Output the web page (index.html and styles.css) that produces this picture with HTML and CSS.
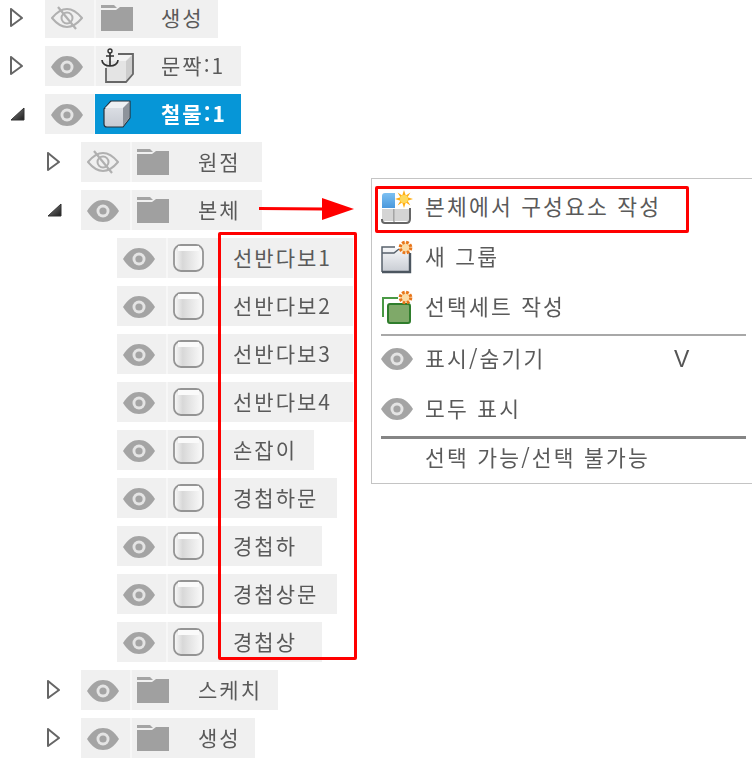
FILE: index.html
```html
<!DOCTYPE html>
<html lang="ko">
<head>
    <meta charset="UTF-8">
    <title>브라우저 트리</title>
    <link rel="stylesheet" href="styles.css">
</head>
<body>
    <svg class="defs" width="0" height="0">
        <defs>
            <linearGradient id="faceGrad" x1="0" y1="0" x2="0" y2="1">
                <stop offset="0" stop-color="#e2e5ea"/>
                <stop offset="1" stop-color="#c6cad2"/>
            </linearGradient>
            <linearGradient id="groupGrad" x1="0" y1="0" x2="0" y2="1">
                <stop offset="0" stop-color="#f6f7f9"/>
                <stop offset="1" stop-color="#c8ccd3"/>
            </linearGradient>
            <linearGradient id="panelGrad" x1="0" y1="0" x2="0" y2="1">
                <stop offset="0" stop-color="#7cc0f2"/>
                <stop offset="1" stop-color="#4a98dc"/>
            </linearGradient>
            <linearGradient id="bodyGrad" x1="0" y1="0" x2="1" y2="0">
                <stop offset="0" stop-color="#fafafa"/>
                <stop offset="0.3" stop-color="#d8d8d8"/>
                <stop offset="1" stop-color="#fbfbfb"/>
            </linearGradient>
            <linearGradient id="darkGrad" x1="0" y1="0" x2="1" y2="1">
                <stop offset="0" stop-color="#888"/>
                <stop offset="1" stop-color="#1c1c1c"/>
            </linearGradient>
            <symbol id="eye" viewBox="0 0 32 22">
                <path d="M0 11C5 3 10 0 16 0s11 3 16 11c-5 8-10 11-16 11S5 19 0 11z" fill="#a4a4a4"/>
                <circle cx="16" cy="11" r="6.5" fill="#e4e4e4"/>
                <circle cx="16" cy="11" r="3.6" fill="#a4a4a4"/>
            </symbol>
            <symbol id="eyeOff" viewBox="0 0 32 24">
                <path d="M1 12C6 6 11 3 16 3s10 3 15 9c-5 6-10 9-15 9S6 18 1 12z" fill="none" stroke="#b0b0b0" stroke-width="2"/>
                <circle cx="16" cy="12" r="5.5" fill="none" stroke="#b0b0b0" stroke-width="2"/>
                <path d="M7 1l18 22" stroke="#b0b0b0" stroke-width="2.2"/>
            </symbol>
            <symbol id="folder" viewBox="0 0 32 26">
                <path d="M0 0h13l3 3H0z" fill="#a4a4a4"/>
                <path d="M0 5h15l4-3h13v24H0z" fill="#a0a0a0"/>
            </symbol>
            <symbol id="cube" viewBox="0 0 28 28">
                <path d="M1 9l7-8h19v17l-7 9H4q-3 0-3-3z" fill="url(#faceGrad)" stroke="#26323d" stroke-width="1.2" stroke-linejoin="round"/>
                <path d="M2 8l6-6h18l-6 6z" fill="#eef0f3"/>
                <path d="M20 8l6-6v16l-6 8z" fill="#8d939b"/>
            </symbol>
            <symbol id="anchorCube" viewBox="0 0 34 36">
                <path d="M6 13h20v21H6z" fill="#e4e4e4"/>
                <path d="M14 13l6-7h13l-7 7z" fill="#f3f3f3"/>
                <path d="M26 13l7-7v20l-7 8z" fill="#cdcdcd"/>
                <path d="M6 20v14h20l7-8V6H18" fill="none" stroke="#666" stroke-width="1.8"/>
                <circle cx="10" cy="3" r="2" fill="none" stroke="#333" stroke-width="1.4"/>
                <path d="M10 5v13M6 8h8M2 12c0 4 4 6 8 6s8-2 8-6" fill="none" stroke="#333" stroke-width="1.7"/>
            </symbol>
            <symbol id="body" viewBox="0 0 31 28">
                <rect x="1" y="1" width="29" height="26" rx="7" fill="url(#bodyGrad)" stroke="#949494" stroke-width="1.8"/>
                <path d="M5 2h21v5H5z" fill="#fafafa"/>
            </symbol>
            <symbol id="gear" viewBox="0 0 16 16">
                <circle cx="8" cy="8" r="5.6" fill="#fbdca8" stroke="#e8761a" stroke-width="3.4" stroke-dasharray="2.8 1.6"/>
                <circle cx="8" cy="8" r="3" fill="#fbdca8"/>
            </symbol>
            <symbol id="spark" viewBox="0 0 18 18">
                <polygon points="9,0 10.800,5.400 15.400,2.600 12.600,7.200 18,9 12.600,10.800 15.400,15.400 10.800,12.600 9,18 7.200,12.600 2.600,15.400 5.400,10.800 0,9 5.400,7.200 2.600,2.600 7.200,5.400" fill="#ffae14"/>
                <circle cx="9" cy="9" r="4" fill="#ffd95a"/>
            </symbol>
            <symbol id="newComponent" viewBox="0 0 32 34">
                <path d="M1 6q0-3 3-3h10v15H1z" fill="url(#panelGrad)"/>
                <path d="M1 19h12v12H1z" fill="#d4d4d4"/>
                <path d="M14 19h14v12H14z" fill="#d4d4d4"/>
                <path d="M1 29v1q0 3 3 3h21q4 0 4-4V18" fill="none" stroke="#666" stroke-width="2"/>
                <path d="M13 19v13" stroke="#777" stroke-width="1"/>
                <use href="#spark" x="14" y="0" width="18" height="18"/>
            </symbol>
            <symbol id="newGroup" viewBox="0 0 32 34">
                <path d="M1 8h14l3 3h11v21H1z" fill="url(#groupGrad)"/>
                <path d="M1 32V7h13M1 13h12l5-4" fill="none" stroke="#58626c" stroke-width="1.500"/>
                <path d="M29 13v19H1" fill="none" stroke="#4c5660" stroke-width="2.400"/>
                <use href="#gear" x="17" y="0" width="15" height="15"/>
            </symbol>
            <symbol id="newSet" viewBox="0 0 32 34">
                <path d="M2 27V8h15" fill="none" stroke="#4a9a45" stroke-width="2"/>
                <rect x="7" y="14" width="22" height="19" rx="2" fill="#7fa969" stroke="#2f7d2c" stroke-width="2"/>
                <use href="#gear" x="17" y="0" width="15" height="15"/>
            </symbol>
        </defs>
    </svg>

    <div class="page">
        <ul class="tree">
            <li class="node">
                <svg class="caret"><polygon points="1,1 1,18 12,10" class="caret-open"/></svg>
                <span class="eye-cell"><svg class="eye-off"><use href="#eyeOff"/></svg></span>
                <span class="main-cell"><svg class="folder"><use href="#folder"/></svg><span class="label">생성</span></span>
            </li>
            <li class="node">
                <svg class="caret"><polygon points="1,1 1,18 12,10" class="caret-open"/></svg>
                <span class="eye-cell"><svg class="eye"><use href="#eye"/></svg></span>
                <span class="main-cell"><svg class="anchor-cube"><use href="#anchorCube"/></svg><span class="label label-anchor">문짝:1</span></span>
            </li>
            <li class="node">
                <svg class="caret caret-low"><polygon points="1,13 14,1 14,13" class="caret-down"/></svg>
                <span class="eye-cell"><svg class="eye"><use href="#eye"/></svg></span>
                <span class="main-cell selected"><svg class="cube"><use href="#cube"/></svg><span class="label label-selected">철물:1</span></span>
            </li>
            <li class="node level-2">
                <svg class="caret"><polygon points="1,1 1,18 12,10" class="caret-open"/></svg>
                <span class="eye-cell"><svg class="eye-off"><use href="#eyeOff"/></svg></span>
                <span class="main-cell wide"><svg class="folder"><use href="#folder"/></svg><span class="label label-folder">원점</span></span>
            </li>
            <li class="node level-2">
                <svg class="caret caret-low"><polygon points="1,13 14,1 14,13" class="caret-down"/></svg>
                <span class="eye-cell"><svg class="eye"><use href="#eye"/></svg></span>
                <span class="main-cell wide"><svg class="folder"><use href="#folder"/></svg><span class="label label-folder">본체</span></span>
            </li>
            <li class="node level-3"><span class="eye-cell"><svg class="eye"><use href="#eye"/></svg></span><span class="main-cell body-cell tail-md"><svg class="body-icon"><use href="#body"/></svg><span class="label label-body">선반다보1</span></span></li>
            <li class="node level-3"><span class="eye-cell"><svg class="eye"><use href="#eye"/></svg></span><span class="main-cell body-cell tail-md"><svg class="body-icon"><use href="#body"/></svg><span class="label label-body">선반다보2</span></span></li>
            <li class="node level-3"><span class="eye-cell"><svg class="eye"><use href="#eye"/></svg></span><span class="main-cell body-cell tail-md"><svg class="body-icon"><use href="#body"/></svg><span class="label label-body">선반다보3</span></span></li>
            <li class="node level-3"><span class="eye-cell"><svg class="eye"><use href="#eye"/></svg></span><span class="main-cell body-cell tail-md"><svg class="body-icon"><use href="#body"/></svg><span class="label label-body">선반다보4</span></span></li>
            <li class="node level-3"><span class="eye-cell"><svg class="eye"><use href="#eye"/></svg></span><span class="main-cell body-cell tail-sm"><svg class="body-icon"><use href="#body"/></svg><span class="label label-body">손잡이</span></span></li>
            <li class="node level-3"><span class="eye-cell"><svg class="eye"><use href="#eye"/></svg></span><span class="main-cell body-cell"><svg class="body-icon"><use href="#body"/></svg><span class="label label-body">경첩하문</span></span></li>
            <li class="node level-3"><span class="eye-cell"><svg class="eye"><use href="#eye"/></svg></span><span class="main-cell body-cell tail-lg"><svg class="body-icon"><use href="#body"/></svg><span class="label label-body">경첩하</span></span></li>
            <li class="node level-3"><span class="eye-cell"><svg class="eye"><use href="#eye"/></svg></span><span class="main-cell body-cell"><svg class="body-icon"><use href="#body"/></svg><span class="label label-body">경첩상문</span></span></li>
            <li class="node level-3"><span class="eye-cell"><svg class="eye"><use href="#eye"/></svg></span><span class="main-cell body-cell tail-lg"><svg class="body-icon"><use href="#body"/></svg><span class="label label-body">경첩상</span></span></li>
            <li class="node level-2">
                <svg class="caret"><polygon points="1,1 1,18 12,10" class="caret-open"/></svg>
                <span class="eye-cell"><svg class="eye"><use href="#eye"/></svg></span>
                <span class="main-cell sketch-cell"><svg class="folder"><use href="#folder"/></svg><span class="label label-folder">스케치</span></span>
            </li>
            <li class="node level-2">
                <svg class="caret"><polygon points="1,1 1,18 12,10" class="caret-open"/></svg>
                <span class="eye-cell"><svg class="eye"><use href="#eye"/></svg></span>
                <span class="main-cell"><svg class="folder"><use href="#folder"/></svg><span class="label label-folder">생성</span></span>
            </li>
        </ul>

        <div class="menu">
            <div class="menu-row"><svg class="menu-icon"><use href="#newComponent"/></svg><span class="menu-text">본체에서 구성요소 작성</span></div>
            <div class="menu-row"><svg class="menu-icon"><use href="#newGroup"/></svg><span class="menu-text">새 그룹</span></div>
            <div class="menu-row"><svg class="menu-icon"><use href="#newSet"/></svg><span class="menu-text">선택세트 작성</span></div>
            <div class="menu-sep"></div>
            <div class="menu-row menu-row-toggle"><svg class="menu-icon menu-eye"><use href="#eye"/></svg><span class="menu-text">표시/숨기기</span><span class="shortcut">V</span></div>
            <div class="menu-row menu-row-all"><svg class="menu-icon menu-eye"><use href="#eye"/></svg><span class="menu-text">모두 표시</span></div>
            <div class="menu-sep menu-sep-dark"></div>
            <div class="menu-row menu-row-last"><span class="menu-text">선택 가능/선택 불가능</span></div>
        </div>

        <div class="mark mark-list"></div>
        <div class="mark mark-item"></div>
        <svg class="red-arrow" viewBox="0 0 96 24">
            <path d="M0 10.500L65 11" stroke="#f00" stroke-width="3"/>
            <polygon points="63,0 95,11 63,22" fill="#f00"/>
        </svg>
    </div>
</body>
</html>
```

FILE: styles.css
```css
* {
    box-sizing: border-box;
}
body {
    margin: 0;
    background: #fff;
    color: #5a5a5a;
    font-family: "Noto Sans CJK KR", "Liberation Sans", sans-serif;
    font-size: 21px;
    letter-spacing: 2px;
}
.defs {
    position: absolute;
}
.page {
    position: relative;
    width: 752px;
    height: 777px;
    overflow: hidden;
    filter: blur(0.4px);
}

/* tree */
.tree {
    list-style: none;
    margin: -2px 0 0;
    padding: 0;
    display: flex;
    flex-direction: column;
    gap: 8px;
}
.node {
    display: flex;
    align-items: center;
    height: 40px;
    padding-left: 45px;
    position: relative;
}
.level-2 {
    padding-left: 81px;
}
.level-3 {
    padding-left: 117px;
}
.caret {
    position: absolute;
    width: 15px;
    height: 20px;
    left: 10px;
    top: 10px;
}
.caret-low {
    top: 13px;
}
.level-2 .caret {
    left: 47px;
}
.caret-open {
    fill: none;
    stroke: #666;
    stroke-width: 2;
    stroke-linejoin: round;
}
.caret-down {
    fill: url(#darkGrad);
    stroke: #333;
    stroke-width: 1;
    stroke-linejoin: round;
}
.eye-cell {
    display: flex;
    align-items: center;
    width: 51px;
    height: 40px;
    padding-left: 6px;
    background: #f0f0f0;
    border-right: 2px solid #f7f7f7;
}
.main-cell {
    display: flex;
    align-items: center;
    height: 40px;
    padding-left: 5px;
    padding-right: 14px;
    background: #f0f0f0;
}
.wide {
    padding-right: 21px;
}
.sketch-cell {
    padding-right: 16px;
}
.body-cell {
    padding-right: 19px;
}
.tail-sm {
    padding-right: 17px;
}
.tail-md {
    padding-right: 21px;
}
.tail-lg {
    padding-right: 25px;
}
.eye {
    width: 32px;
    height: 22px;
    margin-top: 2px;
}
.eye-off {
    width: 32px;
    height: 24px;
}
.folder {
    width: 32px;
    height: 26px;
    flex: none;
}
.anchor-cube {
    width: 34px;
    height: 36px;
    margin-left: -1px;
    flex: none;
}
.cube {
    width: 28px;
    height: 28px;
    margin-left: 2px;
    flex: none;
}
.body-icon {
    width: 31px;
    height: 28px;
    flex: none;
}
.label {
    margin-left: 28px;
    padding-bottom: 3px;
    white-space: nowrap;
}
.label-anchor {
    margin-left: 27px;
    padding-right: 2px;
}
.label-folder {
    margin-left: 29px;
}
.label-body {
    margin-left: 29px;
}
.selected {
    background: #0696d7;
    margin-left: -1px;
    padding-left: 6px;
}
.label-selected {
    margin-left: 30px;
    color: #fff;
    font-weight: 700;
}

/* context menu */
.menu {
    position: absolute;
    left: 371px;
    top: 178px;
    width: 381px;
    height: 306px;
    padding: 3px 6px 0 9px;
    background: #fff;
    border: 1px solid #c4c4c4;
    border-right: none;
    display: flex;
    flex-direction: column;
    font-size: 21.5px;
    letter-spacing: 2.2px;
}
.menu-row {
    display: flex;
    align-items: center;
    height: 50px;
    flex: none;
}
.menu-text {
    padding-bottom: 3px;
}
.menu-row-toggle {
    height: 46px;
}
.menu-row-all {
    height: 54px;
}
.menu-row-last {
    height: 38px;
    padding-left: 44px;
}
.menu-icon {
    width: 32px;
    height: 34px;
    margin-right: 12px;
    flex: none;
}
.menu-eye {
    height: 22px;
}
.shortcut {
    position: absolute;
    left: 302px;
    letter-spacing: 0;
    font-family: "Liberation Sans", sans-serif;
    font-size: 23px;
    color: #555;
}
.menu-sep {
    height: 2px;
    margin: 2px 0 0;
    background: #a8a8a8;
    flex: none;
}
.menu-sep-dark {
    background: #858585;
    height: 3px;
    margin: 0;
}

/* red annotations */
.mark {
    position: absolute;
    border: 3px solid #f00;
    border-radius: 2px;
}
.mark-list {
    left: 218px;
    top: 232px;
    width: 139px;
    height: 428px;
}
.mark-item {
    left: 375px;
    top: 186px;
    width: 314px;
    height: 47px;
}
.red-arrow {
    position: absolute;
    left: 259px;
    top: 198px;
    width: 96px;
    height: 24px;
}
```
